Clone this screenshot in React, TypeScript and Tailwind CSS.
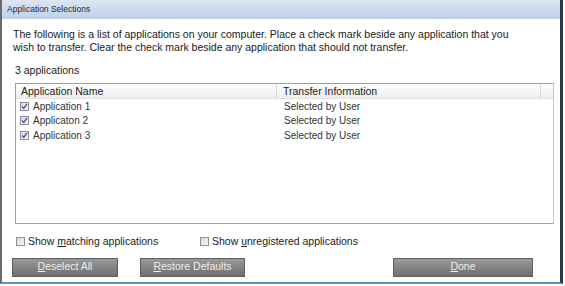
import React from 'react';

const rows = [
  { name: 'Application 1', info: 'Selected by User' },
  { name: 'Applicaton 2', info: 'Selected by User' },
  { name: 'Application 3', info: 'Selected by User' },
];

function CheckMark({ checked }: { checked: boolean }) {
  return (
    <span className="inline-flex h-[9px] w-[9px] shrink-0 items-center justify-center border border-[#8f8f8f] bg-gradient-to-br from-[#dcdcdc] to-[#f4f4f4]">
      {checked && (
        <svg width="7" height="7" viewBox="0 0 7 7">
          <path d="M1 3.5 L2.8 5.5 L6 1" fill="none" stroke="#4a5aa8" strokeWidth="1.4" />
        </svg>
      )}
    </span>
  );
}

function GrayButton({ children, className }: { children: React.ReactNode; className: string }) {
  return (
    <button
      className={
        'flex h-[19px] items-center justify-center border border-[#5e5e5e] bg-gradient-to-b from-[#9a9a9a] to-[#6f6f6f] text-[10.5px] text-[#eeeeee] ' +
        className
      }
    >
      {children}
    </button>
  );
}

export default function App() {
  return (
    <div className="h-[286px] w-[565px] bg-white font-['Liberation_Sans',Arial,sans-serif] text-[#222]">
      <div className="flex h-[284px] w-[563px] flex-col border-l-2 border-r-[3px] border-b-2 border-l-[#6b6b6b] border-r-[#27394a] border-b-[#5c93b5]">
        <div className="flex h-[19px] items-center bg-gradient-to-b from-[#dce6f4] to-[#bfd0e8] pl-[5px] text-[8.5px] text-[#1e2a3a]">
          Application Selections
        </div>
        <div className="flex flex-1 flex-col px-[11px]">
          <p className="mt-[9px] text-[10.5px] leading-[13px] text-[#1a1a1a]">
            The following is a list of applications on your computer. Place a check mark beside any application that you
            <br />
            wish to transfer. Clear the check mark beside any application that should not transfer.
          </p>
          <div className="mt-[10px] pl-[2px] text-[10.5px] leading-[13px]">3 applications</div>
          <div className="ml-[2px] mt-[6px] flex h-[141px] w-[539px] flex-col border border-[#a0a0a0] border-r-[#c8c8c8]">
            <div className="flex h-[15px] border-b border-[#e2e2e2] bg-gradient-to-b from-[#ffffff] to-[#eceef0] text-[10.5px] leading-[15px]">
              <div className="w-[261px] border-r border-[#d6d6d6] pl-[5px]">Application Name</div>
              <div className="flex-1 border-r border-[#d6d6d6] pl-[6px]">Transfer Information</div>
              <div className="w-[12px]" />
            </div>
            {rows.map((r) => (
              <div key={r.name} className="flex h-[14.5px] items-center text-[10px] text-[#333]">
                <div className="flex w-[262px] items-center gap-[4px] pl-[4px]">
                  <CheckMark checked />
                  <span>{r.name}</span>
                </div>
                <div className="pl-[6px]">{r.info}</div>
              </div>
            ))}
          </div>
          <div className="mt-[10px] flex items-center text-[10.5px]">
            <label className="flex w-[187px] items-center gap-[3px] pl-[3px]">
              <CheckMark checked={false} />
              <span>
                Show <u>m</u>atching applications
              </span>
            </label>
            <label className="flex items-center gap-[3px]">
              <CheckMark checked={false} />
              <span>
                Show <u>u</u>nregistered applications
              </span>
            </label>
          </div>
          <div className="-ml-[1px] mt-[8px] flex">
            <GrayButton className="w-[106px]">
              <span><u>D</u>eselect All</span>
            </GrayButton>
            <GrayButton className="ml-[22px] w-[105px]">
              <span><u>R</u>estore Defaults</span>
            </GrayButton>
            <GrayButton className="ml-[148px] w-[140px]">
              <span><u>D</u>one</span>
            </GrayButton>
          </div>
        </div>
      </div>
    </div>
  );
}
